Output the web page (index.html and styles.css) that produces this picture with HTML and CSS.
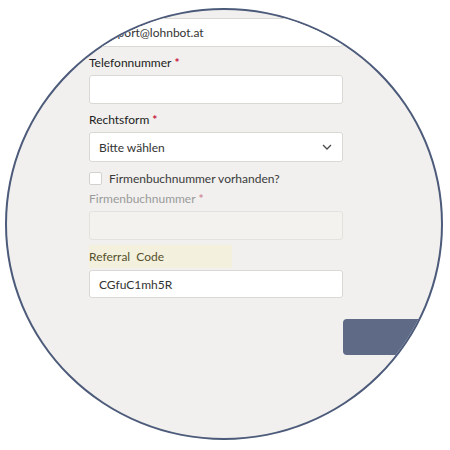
FILE: index.html
```html
<html lang="de">
<head>
  <meta charset="UTF-8">
  <title>Registrierung</title>
  <link rel="stylesheet" href="styles.css">
</head>
<body>

  <div class="lupe">
    <form class="formular">
      <div class="feld">
        <input type="text" class="eingabe" value="support@lohnbot.at">
      </div>

      <div class="feld">
        <label class="titel">Telefonnummer<span class="pflicht">*</span></label>
        <input type="text" class="eingabe">
      </div>

      <div class="feld">
        <label class="titel">Rechtsform<span class="pflicht">*</span></label>
        <div class="auswahl">
          <span>Bitte wählen</span>
          <svg width="10" height="6" viewBox="0 0 10 6">
            <path d="M1 1 L5 5 L9 1" fill="none" stroke="#4a4a4a" stroke-width="1.3"/>
          </svg>
        </div>
      </div>

      <label class="haken">
        <span class="box"></span>
        Firmenbuchnummer vorhanden?
      </label>

      <div class="feld">
        <label class="titel grau">Firmenbuchnummer<span class="pflicht">*</span></label>
        <input type="text" class="eingabe gesperrt" disabled>
      </div>

      <div class="feld referral">
        <label class="titel markiert">Referral&nbsp; Code</label>
        <input type="text" class="eingabe" value="CGfuC1mh5R">
      </div>

      <div class="aktionen">
        <button type="button" class="weiter" aria-label="Weiter"></button>
      </div>
    </form>
  </div>

</body>
</html>
```

FILE: styles.css
```css
* { box-sizing: border-box; }
body, html {
  margin: 0;
  background: #fff;
  font-family: Lato, "Noto Sans", sans-serif;
}

.lupe {
  width: 438px;
  height: 432px;
  margin: 8px 0 0 5px;
  border: 2px solid #4d5b7a;
  border-radius: 50%;
  overflow: hidden;
  background: #f1f0ee;
}

.formular {
  padding: 8px 0 0 82px;
}

.feld {
  width: 254px;
  margin-bottom: 8px;
}

.titel {
  display: block;
  height: 16px;
  line-height: 16px;
  margin-bottom: 4px;
  font-size: 12px;
  color: #222;
}

.pflicht {
  margin-left: 3px;
  font-weight: bold;
  color: #c8103e;
}

.grau {
  color: #9a9a9a;
}
.grau .pflicht {
  color: #d28a9b;
}

.eingabe {
  display: block;
  width: 100%;
  height: 29px;
  padding: 0 9px;
  border: 1px solid #dad8d4;
  border-radius: 3px;
  background: #fff;
  font-family: Lato, sans-serif;
  font-size: 12px;
  color: #333;
}

.gesperrt {
  background: #f3f2ef;
  border-color: #e4e2de;
}

.auswahl {
  display: flex;
  justify-content: space-between;
  align-items: center;
  height: 30px;
  padding: 0 10px 0 9px;
  border: 1px solid #dad8d4;
  border-radius: 3px;
  background: #fff;
  font-size: 12px;
  color: #333;
}

.haken {
  display: flex;
  align-items: center;
  gap: 7px;
  height: 16px;
  margin-bottom: 5px;
  font-size: 12px;
  color: #3a3a3a;
}

.box {
  width: 13px;
  height: 13px;
  border: 1px solid #d3d1cd;
  border-radius: 2px;
  background: #fff;
}

.referral .markiert {
  width: 143px;
  height: 23px;
  line-height: 23px;
  margin: -3px 0 2px;
  background: #f4f0de;
  color: #55502c;
}

.referral .eingabe {
  height: 28px;
}

.aktionen {
  padding: 13px 0 0 254px;
}

.weiter {
  display: block;
  width: 220px;
  height: 36px;
  border: none;
  border-radius: 4px;
  background: #5e6a86;
}
```
